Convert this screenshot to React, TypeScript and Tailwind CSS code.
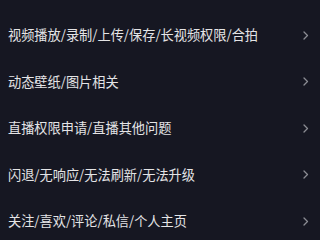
const items = [
  "视频播放/录制/上传/保存/长视频权限/合拍",
  "动态壁纸/图片相关",
  "直播权限申请/直播其他问题",
  "闪退/无响应/无法刷新/无法升级",
  "关注/喜欢/评论/私信/个人主页",
];

function Chevron() {
  return (
    <svg width="6" height="9" viewBox="0 0 6 9" fill="none">
      <path d="M1 1l3.5 3.5L1 8" stroke="#8b8c93" strokeWidth="1.3" strokeLinecap="round" strokeLinejoin="round" />
    </svg>
  );
}

export default function App() {
  return (
    <div
      className="w-[320px] h-[240px] overflow-hidden bg-[#161722] pt-[12px]"
      style={{ fontFamily: '"Noto Sans CJK SC", "Noto Sans", sans-serif' }}
    >
      {items.map((label) => (
        <div key={label} className="flex items-center justify-between h-[46.5px] pl-[8px] pr-[11px]">
          <span className="text-[13.2px] text-[#e4e4e6] whitespace-nowrap">{label}</span>
          <Chevron />
        </div>
      ))}
    </div>
  );
}
